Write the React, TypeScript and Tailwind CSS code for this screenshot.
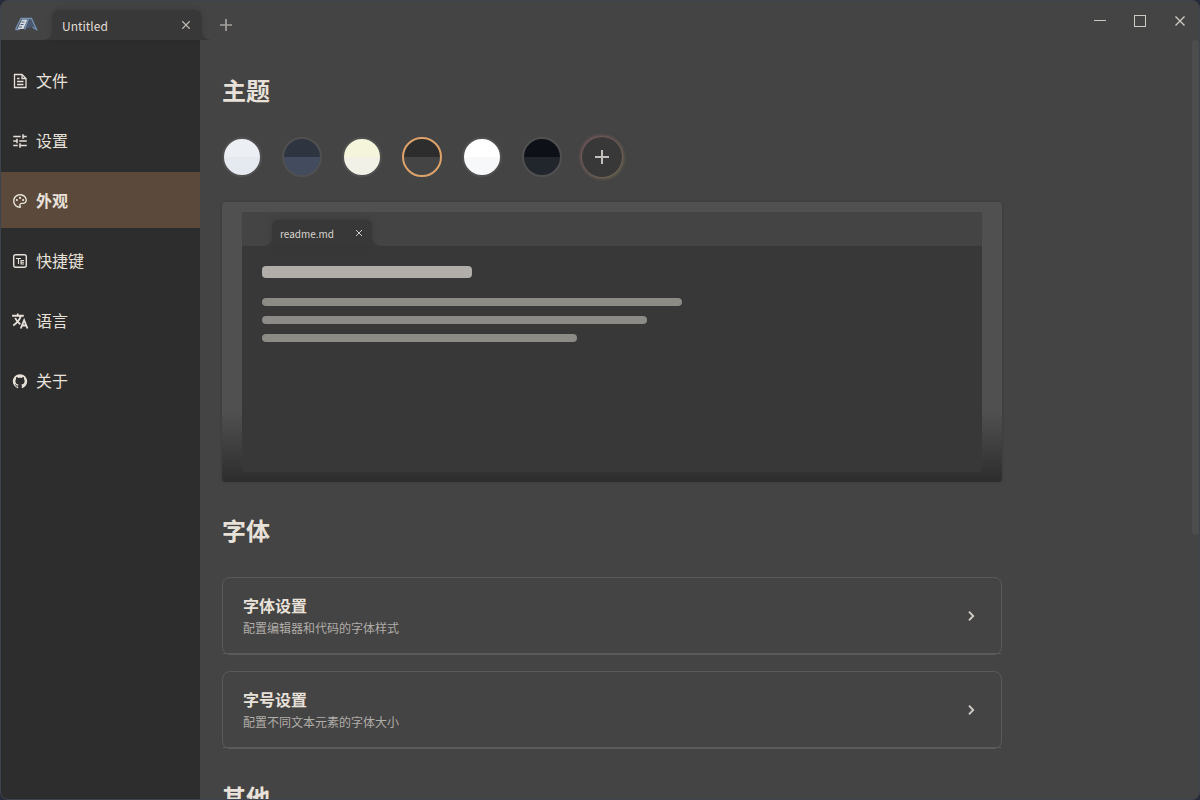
import type { ReactNode } from "react";
import { MdTune } from "react-icons/md";
import { RiGithubFill, RiPaletteLine } from "react-icons/ri";

interface NavItem {
  label: string;
  icon: ReactNode;
}

interface Theme {
  name: string;
  swatch: string;
}

const navItems: NavItem[] = [
  { label: "文件", icon: <FileIcon /> },
  { label: "设置", icon: <MdTune /> },
  { label: "外观", icon: <RiPaletteLine viewBox="-1 -1 26 26" /> },
  { label: "快捷键", icon: <ShortcutIcon /> },
  { label: "语言", icon: <TranslateIcon /> },
  { label: "关于", icon: <RiGithubFill viewBox="-0.5 -1 25 25" /> },
];

const themes: Theme[] = [
  { name: "nord", swatch: "from-[#eceff4] to-[#e5e9f0] border-[#505050]" },
  { name: "nord-dark", swatch: "from-[#2e3440] to-[#434c5e] border-[#505050]" },
  { name: "frame", swatch: "from-[#f5f5dc] to-[#f1f1e8] border-[#505050]" },
  { name: "frame-dark", swatch: "from-[#2d2d2d] to-[#444444] border-[#dda36b]" },
  { name: "crepe", swatch: "from-[#ffffff] to-[#f6f8fa] border-[#505050]" },
  { name: "crepe-dark", swatch: "from-[#0d1117] to-[#21262d] border-[#505050]" },
];

const fontCards = [
  { title: "字体设置", desc: "配置编辑器和代码的字体样式" },
  { title: "字号设置", desc: "配置不同文本元素的字体大小" },
];

function FileIcon() {
  return (
    <svg viewBox="0 0 18 18" fill="none" stroke="currentColor" strokeWidth="1.3" aria-hidden>
      <path d="M3.500 2.500h7.500l4 4v9H3.500z" />
      <path d="M11 2.500v4h4M6 6.500h2.500M6 9.500h6.500M6 12.500h6.500" />
    </svg>
  );
}

function ShortcutIcon() {
  return (
    <svg viewBox="0 0 18 18" fill="none" stroke="currentColor" aria-hidden>
      <rect x="2.700" y="2.700" width="12.600" height="12.600" rx="2" strokeWidth="1.400" />
      <path d="M5 6.500h5M7.500 6.500v5.500M13 8.500H10v3.500h3M10 10.300h3" strokeWidth="1.100" />
    </svg>
  );
}

function TranslateIcon() {
  return (
    <svg viewBox="0 0 24 24" fill="none" stroke="currentColor" strokeWidth="2.4" aria-hidden>
      <path d="M1.500 5H17M9 2v3M13.200 5C12 9.500 8 14.500 3 18M5.500 8c1.500 3.500 4 6 7 8.300" />
      <path d="m13 22 4.500-11L22 22M14.800 18h5.400" />
    </svg>
  );
}

function Logo() {
  return (
    <svg viewBox="0 0 24 16" className="h-4 w-6" aria-hidden>
      <path d="M8 3.500h5.500L9.500 13H3.500z" fill="#d5dce6" />
      <path d="M15.500 3.500h1.500l4.500 9.500-3.500-2-6.500 2z" fill="#4c5870" />
      <path d="M7.500 6h3M6.500 8.500h3M5 11h3" stroke="#4c5870" strokeWidth="1" />
      <path d="M1.500 13.500 7 2.500h10.500l5 11-4-2.300M14.500 3l-4 10.500M1.500 13.500h4" fill="none" stroke="#7392b5" strokeWidth="1.300" />
    </svg>
  );
}

// 12px 画布上的叉号，标签页与窗口按钮共用
function CloseGlyph({ className }: { className: string }) {
  return (
    <svg viewBox="0 0 12 12" className={className} stroke="currentColor" strokeWidth="1.4" aria-hidden>
      <path d="m1.500 1.500 9 9M10.500 1.500l-9 9" />
    </svg>
  );
}

// 标签底部向外翻的圆角
function TabFlares() {
  return (
    <>
      <span className="absolute bottom-0 -left-2 size-2 bg-[radial-gradient(circle_at_top_left,transparent_7px,#383838_8px)]" />
      <span className="absolute -right-2 bottom-0 size-2 bg-[radial-gradient(circle_at_top_right,transparent_7px,#383838_8px)]" />
    </>
  );
}

function TitleBar() {
  return (
    <header className="-mr-px flex h-[39px] shrink-0 items-stretch justify-between">
      <div className="flex">
        <div className="flex w-[51px] items-center pt-1.5 pl-[13px]">
          <Logo />
        </div>
        <div className="relative mt-[9px] flex w-[150px] items-center justify-between rounded-t-lg bg-[#383838] pr-[11px] pl-2.5 text-[#e3ddd6] shadow-[0_-2px_6px_rgba(0,0,0,0.12)]">
          <span className="pt-0.5 text-xs leading-5">Untitled</span>
          <button type="button" aria-label="关闭标签" className="text-[#bdb8b2]">
            <CloseGlyph className="size-2.5" />
          </button>
          <TabFlares />
        </div>
        <button type="button" aria-label="新建标签" className="ml-[18px] pt-2 text-[#a5a29e]">
          <svg viewBox="0 0 12 12" className="size-3" stroke="currentColor" strokeWidth="1.7" aria-hidden>
            <path d="M0 6h12M6 0v12" />
          </svg>
        </button>
      </div>
      <div className="flex text-[#cfcac4]">
        <button type="button" aria-label="最小化" className="flex w-10 items-center justify-center">
          <span className="h-px w-3 bg-[#cfcac4]" />
        </button>
        <button type="button" aria-label="最大化" className="flex w-10 items-center justify-center">
          <span className="size-3 border border-[#cfcac4]" />
        </button>
        <button type="button" aria-label="关闭" className="flex w-10 items-center justify-center">
          <CloseGlyph className="size-3" />
        </button>
      </div>
    </header>
  );
}

function Sidebar({ active }: { active: string }) {
  return (
    <nav className="flex w-[199px] shrink-0 flex-col gap-1 bg-[#2d2d2d] pt-3">
      {navItems.map((item) => (
        <button
          key={item.label}
          type="button"
          className={[
            "flex h-14 items-center gap-[7px] px-2.5 text-base text-[#e8e1d9]",
            item.label === active ? "bg-[#5b4a3b] font-bold" : "",
          ].join(" ")}
        >
          <span className="pt-0.5 [&>svg]:size-[18px]">{item.icon}</span>
          <span>{item.label}</span>
        </button>
      ))}
    </nav>
  );
}

function SectionTitle({ children }: { children: ReactNode }) {
  return <h2 className="text-2xl leading-9 font-bold text-[#e8e1d9]">{children}</h2>;
}

function ThemePicker() {
  return (
    <div className="mt-[29px] flex gap-5">
      {themes.map((theme) => (
        <button
          key={theme.name}
          type="button"
          aria-label={theme.name}
          className={[
            "size-10 rounded-full border-2 bg-linear-to-b from-50% to-50% bg-origin-border",
            theme.swatch,
          ].join(" ")}
        />
      ))}
      <button
        type="button"
        aria-label="添加主题"
        className="flex size-10 items-center justify-center rounded-full bg-[#383838] text-[#c4c0bb] shadow-[-1px_-1px_4px_rgba(190,110,130,0.5),1px_1px_4px_rgba(170,160,100,0.5)]"
      >
        <svg viewBox="0 0 14 14" className="size-3.5" stroke="currentColor" strokeWidth="2" aria-hidden>
          <path d="M0 7h14M7 0v14" />
        </svg>
      </button>
    </div>
  );
}

function ThemePreview() {
  return (
    <div className="mt-[25px] rounded bg-linear-to-b from-[#505050] from-75% to-[#2d2d2d] px-5 py-2.5 shadow-[0_0_3px_rgba(0,0,0,0.2)]">
      <div className="flex h-[260px] flex-col overflow-hidden rounded bg-[#383838]">
        <div className="flex h-[34px] items-end bg-[#444444] pl-[30px]">
          <div className="relative flex h-[26px] w-[100px] items-center justify-between rounded-t-md bg-[#383838] px-2 text-[#d9d4cd] shadow-[0_-2px_6px_rgba(0,0,0,0.12)]">
            <span className="pt-0.5 text-[10px] leading-4">readme.md</span>
            <CloseGlyph className="mr-px size-2" />
            <TabFlares />
          </div>
        </div>
        <div className="p-5">
          <div className="h-3 w-[30%] rounded bg-[#b1ada8]" />
          <div className="mt-5 flex flex-col gap-2.5">
            <div className="h-2 w-[60%] rounded bg-[#8c8b86]" />
            <div className="h-2 w-[55%] rounded bg-[#8c8b86]" />
            <div className="h-2 w-[45%] rounded bg-[#8c8b86]" />
          </div>
        </div>
      </div>
    </div>
  );
}

function SettingCard({ title, desc }: { title: string; desc: string }) {
  return (
    <button type="button" className="block w-full rounded-lg border border-[#5a5a5a] text-left">
      <span className="flex items-center justify-between border-b border-[#5a5a5a] px-5 py-[15px]">
        <span className="flex flex-col gap-px">
          <span className="text-base leading-6 font-bold text-[#e8e1d9]">{title}</span>
          <span className="text-xs leading-5 text-[#b1ada8]">{desc}</span>
        </span>
        <svg viewBox="0 0 10 10" className="mr-[5px] size-2.5 text-[#d0cbc5]" fill="none" stroke="currentColor" strokeWidth="1.9" aria-hidden>
          <path d="m3 .7 4.200 4.300L3 9.300" />
        </svg>
      </span>
    </button>
  );
}

export default function App() {
  return (
    <div className="h-screen bg-[#272c38] font-['Noto_Sans_CJK_SC','Noto_Sans',sans-serif]">
      <div className="relative flex h-full flex-col overflow-hidden rounded-lg border border-[#3d434f] bg-[#444444]">
        <TitleBar />
        <div className="flex min-h-0 flex-1">
          <Sidebar active="外观" />
          <main className="min-w-0 flex-1 overflow-y-auto px-[22px] pt-8 [scrollbar-width:none]">
            <div className="max-w-[780px]">
              <section>
                <SectionTitle>主题</SectionTitle>
                <ThemePicker />
                <ThemePreview />
              </section>
              <section className="mt-[30px]">
                <SectionTitle>字体</SectionTitle>
                <div className="mt-[29px] flex flex-col gap-4">
                  {fontCards.map((card) => (
                    <SettingCard key={card.title} title={card.title} desc={card.desc} />
                  ))}
                </div>
              </section>
              <section className="mt-[30px]">
                <SectionTitle>其他</SectionTitle>
              </section>
            </div>
          </main>
        </div>
        <div className="absolute top-[39px] right-0 h-[62%] w-[7px] rounded bg-[#4d4d4d]" />
      </div>
    </div>
  );
}
